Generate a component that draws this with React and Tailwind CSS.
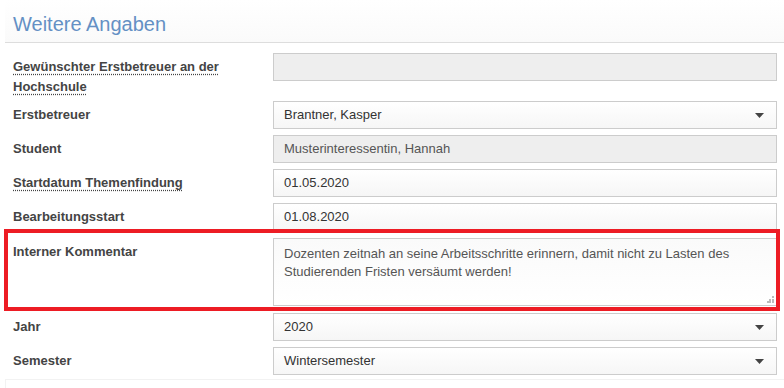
const rows = [
  { label: "Gewünschter Erstbetreuer an der Hochschule", abbr: true, value: "", kind: "readonly" },
  { label: "Erstbetreuer", value: "Brantner, Kasper", kind: "select" },
  { label: "Student", value: "Musterinteressentin, Hannah", kind: "readonly" },
  { label: "Startdatum Themenfindung", abbr: true, value: "01.05.2020", kind: "input" },
  { label: "Bearbeitungsstart", value: "01.08.2020", kind: "input" },
];

const rowsAfter = [
  { label: "Jahr", value: "2020", kind: "select" },
  { label: "Semester", value: "Wintersemester", kind: "select" },
];

function Caret() {
  return (
    <svg width="9" height="5" viewBox="0 0 9 5" className="shrink-0">
      <path d="M0 0h9L4.5 5z" fill="#444" />
    </svg>
  );
}

function Label({ text, abbr }) {
  return (
    <div className="w-[273px] shrink-0 pl-[13px] pr-[40px] pt-[4px] text-[13px] leading-[20px] font-bold text-[#444]">
      {abbr ? (
        <span className="underline decoration-dotted decoration-[#444] underline-offset-[3px]">{text}</span>
      ) : (
        text
      )}
    </div>
  );
}

function Field({ value, kind }) {
  if (kind === "readonly") {
    return (
      <div className="flex-1 h-[28px] border border-[#cccccc] bg-[#eeeeee] px-[10px] flex items-center text-[13px] text-[#555]">
        {value}
      </div>
    );
  }
  return (
    <div className="flex-1 h-[28px] border border-[#cccccc] bg-gradient-to-b from-white to-[#f6f6f6] pl-[10px] pr-[12px] flex items-center justify-between text-[13px] text-[#333]">
      <span>{value}</span>
      {kind === "select" && <Caret />}
    </div>
  );
}

function Row({ row }) {
  return (
    <div className="flex items-start">
      <Label text={row.label} abbr={row.abbr} />
      <Field value={row.value} kind={row.kind} />
    </div>
  );
}

export default function App() {
  return (
    <div className="w-[784px] h-[388px] bg-white overflow-hidden" style={{ fontFamily: '"Liberation Sans", Arial, sans-serif' }}>
      <div className="ml-[5px] h-[43px] bg-gradient-to-b from-white to-[#fafafa] border-b border-[#dddddd] pl-[8px] pt-[12px]">
        <h2 className="text-[20px] leading-[24px] text-[#6490c4]">Weitere Angaben</h2>
      </div>

      <div className="pr-[7px] pt-[10px] flex flex-col gap-[6px]">
        <div className="flex items-start h-[42px]">
          <Label text={rows[0].label} abbr />
          <Field value="" kind="readonly" />
        </div>
        {rows.slice(1).map((r) => (
          <Row key={r.label} row={r} />
        ))}

        <div className="relative flex items-start py-[1px]">
          <Label text="Interner Kommentar" />
          <div className="relative flex-1 h-[68px] border border-[#cccccc] bg-gradient-to-b from-[#fafafa] to-white px-[10px] pt-[6px] text-[13px] leading-[18px] text-[#555]">
            Dozenten zeitnah an seine Arbeitsschritte erinnern, damit nicht zu Lasten des Studierenden Fristen versäumt werden!
            <svg width="7" height="7" viewBox="0 0 7 7" className="absolute right-[2px] bottom-[2px]">
              <g fill="#bbb">
                <rect x="5" y="0" width="2" height="2" />
                <rect x="2" y="3" width="2" height="2" />
                <rect x="5" y="3" width="2" height="2" />
                <rect x="0" y="5" width="2" height="2" />
                <rect x="2" y="5" width="2" height="2" />
                <rect x="5" y="5" width="2" height="2" />
              </g>
            </svg>
          </div>
          <div className="absolute left-[4px] right-[-3px] top-[-8px] bottom-[-4px] border-[4px] border-[#ed1c24] pointer-events-none" />
        </div>

        {rowsAfter.map((r) => (
          <Row key={r.label} row={r} />
        ))}
      </div>

      <div className="ml-[5px] mt-[4px] h-[10px] border-t border-l border-[#f2f2f2]" />
    </div>
  );
}
